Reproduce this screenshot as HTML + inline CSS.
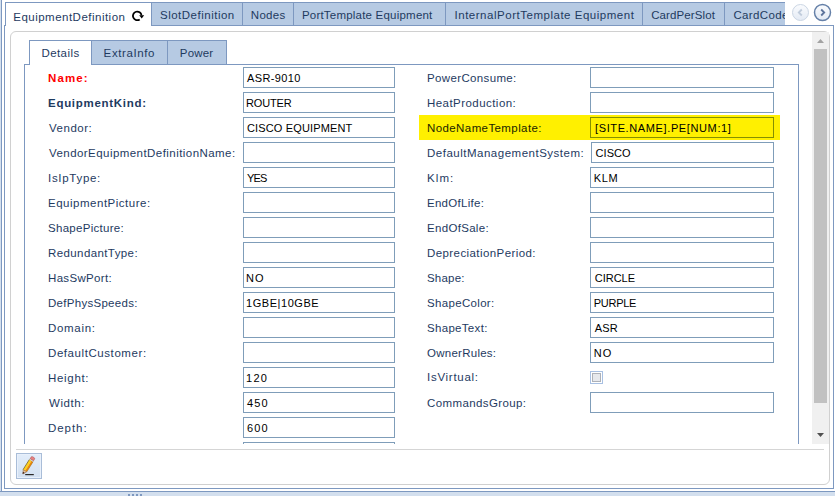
<!DOCTYPE html>
<html><head><meta charset="utf-8"><style>
*{box-sizing:border-box}
html,body{margin:0;padding:0;width:835px;height:496px;overflow:hidden;background:#fff;font-family:"Liberation Sans",sans-serif;}
.abs,.t,.tab,.inp,.chk{position:absolute}
.t{line-height:20px;white-space:nowrap}
#outerL{position:absolute;left:0;top:0;width:1px;height:496px;background:#d3dfee}
#outerL2{position:absolute;left:1px;top:0;width:1px;height:492px;background:#7d98c0}
#outerB{position:absolute;left:0;top:491px;width:835px;height:1px;background:#7d98c0}
#split{position:absolute;left:0;top:492px;width:835px;height:4px;background:#d3dfee}
.grip{position:absolute;top:494px;width:2px;height:2px;background:#7d98c0}
#tabclip{position:absolute;left:0;top:0;width:785px;height:26px;overflow:hidden}
.tab{top:2px;height:24px;background:#b6cae3;border:1px solid #7d98c0}
#seltab{position:absolute;left:5px;top:2px;width:147px;height:24px;background:#fff;border:1px solid #7d98c0;border-bottom:none;z-index:2}
#panel{position:absolute;left:4px;top:25px;width:830px;height:464px;border:1px solid #7d98c0;background:#fff}
#gray{position:absolute;left:10px;top:31px;width:820px;height:454px;border:1px solid #d0d0d0;border-radius:6px;background:#fff}
#scroll{position:absolute;left:11px;top:32px;width:801px;height:412px;overflow:hidden}
#inner{position:absolute;left:-11px;top:-32px;width:835px;height:500px}
#sub{position:absolute;left:24px;top:64px;width:775px;height:500px;border:1px solid #7d98c0;border-bottom:none}
.stab{position:absolute;top:40px;height:25px;background:#b6cae3;border:1px solid #7d98c0}
.inp{height:21px;border:1px solid #7f9db9;background:#fff}
.chk{width:13px;height:13px;border:1px solid #a8c0e2;background:#fff;padding:1px}
.chk div{width:9px;height:9px;border:1px solid #adb1b8;background:#e6e8ec}
#track{position:absolute;left:812px;top:32px;width:17px;height:412px;background:#f0f0f0}
#thumb{position:absolute;left:814px;top:49px;width:13px;height:354px;background:#c1c1c1}
#hl{position:absolute;left:419px;top:115px;width:361px;height:25px;background:#fff000}
#gline{position:absolute;left:16px;top:449px;width:808px;height:1px;background:#d5d5d5}
#editbtn{position:absolute;left:16px;top:453px;width:26px;height:26px;border:1px solid #a9bdd8;background:linear-gradient(#e2edfa,#d2e0f1);box-shadow:inset 0 0 0 1px #e8f0fb}
</style></head><body>
<div id="outerL"></div><div id="outerL2"></div><div id="outerB"></div>
<div id="split"></div>
<div class="grip" style="left:128px"></div><div class="grip" style="left:132px"></div><div class="grip" style="left:136px"></div><div class="grip" style="left:140px"></div>
<div id="panel"></div>
<div id="tabclip"><div class="tab" style="left:151px;width:92px"></div><div class="tab" style="left:242px;width:52px"></div><div class="tab" style="left:293px;width:153px"></div><div class="tab" style="left:445px;width:198px"></div><div class="tab" style="left:642px;width:83px"></div><div class="tab" style="left:724px;width:77px"></div><div class="t" style="left:160.0px;top:5px;font-size:11.5px;font-weight:normal;color:#1e3a5f;letter-spacing:0.500px">SlotDefinition</div><div class="t" style="left:250.8px;top:5px;font-size:11.5px;font-weight:normal;color:#1e3a5f;letter-spacing:0.300px">Nodes</div><div class="t" style="left:301.9px;top:5px;font-size:11.5px;font-weight:normal;color:#1e3a5f;letter-spacing:0.214px">PortTemplate Equipment</div><div class="t" style="left:454.5px;top:5px;font-size:11.5px;font-weight:normal;color:#1e3a5f;letter-spacing:0.521px">InternalPortTemplate Equipment</div><div class="t" style="left:651.2px;top:5px;font-size:11.5px;font-weight:normal;color:#1e3a5f;letter-spacing:0.110px">CardPerSlot</div><div class="t" style="left:733.4px;top:5px;font-size:11.5px;font-weight:normal;color:#1e3a5f;letter-spacing:0.355px">CardCode</div></div>
<div id="seltab"></div>
<div class="t" style="left:13.3px;top:7px;font-size:11.5px;font-weight:normal;color:#1e3a5f;letter-spacing:0.483px;z-index:3">EquipmentDefinition</div>
<svg class="abs" style="left:130px;top:8px;z-index:3" width="16" height="16" viewBox="0 0 16 16">
<path d="M9.7 11.4 A4.3 4.3 0 1 1 11.5 7.4" fill="none" stroke="#000" stroke-width="1.8"/>
<path d="M9.2 7.2 L14.2 7.2 L11.7 10.4 Z" fill="#000"/>
</svg>
<svg class="abs" style="left:791px;top:3px" width="19" height="19" viewBox="0 0 19 19">
<defs><linearGradient id="g1" x1="0" y1="0" x2="0" y2="1"><stop offset="0" stop-color="#fbfcfe"/><stop offset="1" stop-color="#e3eaf4"/></linearGradient></defs>
<circle cx="9.5" cy="9.5" r="8" fill="url(#g1)" stroke="#cbd6e4" stroke-width="1"/>
<path d="M10.8 6.5 L7.8 9.5 L10.8 12.5" fill="none" stroke="#c0ccdc" stroke-width="1.8"/>
</svg>
<svg class="abs" style="left:813px;top:3px" width="19" height="19" viewBox="0 0 19 19">
<circle cx="9.5" cy="9.5" r="8" fill="url(#g1)" stroke="#6580a8" stroke-width="1.5"/>
<path d="M8.2 6.5 L11.2 9.5 L8.2 12.5" fill="none" stroke="#5c739b" stroke-width="1.8"/>
</svg>
<div id="gray"></div>
<div id="scroll"><div id="inner">
<div id="sub"></div>
<div class="stab" style="left:91px;width:77px"></div>
<div class="stab" style="left:167px;width:60px"></div>
<div style="position:absolute;left:29px;top:40px;width:63px;height:25px;background:#fff;border:1px solid #7d98c0;border-bottom:none"></div>
<div class="t" style="left:41.4px;top:43px;font-size:11.5px;font-weight:normal;color:#1e3a5f;letter-spacing:0.433px">Details</div><div class="t" style="left:103.6px;top:43px;font-size:11.5px;font-weight:normal;color:#1e3a5f;letter-spacing:0.613px">ExtraInfo</div><div class="t" style="left:179.8px;top:43px;font-size:11.5px;font-weight:normal;color:#1e3a5f;letter-spacing:0.200px">Power</div>
<div class="t" style="left:48.0px;top:68px;font-size:11.5px;font-weight:bold;color:#ff0000;letter-spacing:1.100px">Name:</div>
<div class="inp" style="left:243px;top:67px;width:152px"></div>
<div class="t" style="left:247.0px;top:68px;font-size:11px;font-weight:normal;color:#000;letter-spacing:0.386px">ASR-9010</div>
<div class="t" style="left:48.0px;top:93px;font-size:11.5px;font-weight:bold;color:#1e3a5f;letter-spacing:0.715px">EquipmentKind:</div>
<div class="inp" style="left:243px;top:92px;width:152px"></div>
<div class="t" style="left:246.0px;top:93px;font-size:11px;font-weight:normal;color:#000;letter-spacing:-0.160px">ROUTER</div>
<div class="t" style="left:49.0px;top:118px;font-size:11.5px;font-weight:normal;color:#1e3a5f;letter-spacing:0.517px">Vendor:</div>
<div class="inp" style="left:243px;top:117px;width:152px"></div>
<div class="t" style="left:247.0px;top:118px;font-size:11px;font-weight:normal;color:#000;letter-spacing:0.143px">CISCO EQUIPMENT</div>
<div class="t" style="left:49.0px;top:143px;font-size:11.5px;font-weight:normal;color:#1e3a5f;letter-spacing:0.445px">VendorEquipmentDefinitionName:</div>
<div class="inp" style="left:243px;top:142px;width:152px"></div>
<div class="t" style="left:48.0px;top:168px;font-size:11.5px;font-weight:normal;color:#1e3a5f;letter-spacing:0.700px">IsIpType:</div>
<div class="inp" style="left:243px;top:167px;width:152px"></div>
<div class="t" style="left:247.0px;top:168px;font-size:11px;font-weight:normal;color:#000;letter-spacing:-0.800px">YES</div>
<div class="t" style="left:48.0px;top:193px;font-size:11.5px;font-weight:normal;color:#1e3a5f;letter-spacing:0.512px">EquipmentPicture:</div>
<div class="inp" style="left:243px;top:192px;width:152px"></div>
<div class="t" style="left:48.0px;top:218px;font-size:11.5px;font-weight:normal;color:#1e3a5f;letter-spacing:0.292px">ShapePicture:</div>
<div class="inp" style="left:243px;top:217px;width:152px"></div>
<div class="t" style="left:48.0px;top:243px;font-size:11.5px;font-weight:normal;color:#1e3a5f;letter-spacing:0.400px">RedundantType:</div>
<div class="inp" style="left:243px;top:242px;width:152px"></div>
<div class="t" style="left:48.0px;top:268px;font-size:11.5px;font-weight:normal;color:#1e3a5f;letter-spacing:0.322px">HasSwPort:</div>
<div class="inp" style="left:243px;top:267px;width:152px"></div>
<div class="t" style="left:246.0px;top:268px;font-size:11px;font-weight:normal;color:#000;letter-spacing:1.000px">NO</div>
<div class="t" style="left:48.0px;top:293px;font-size:11.5px;font-weight:normal;color:#1e3a5f;letter-spacing:0.285px">DefPhysSpeeds:</div>
<div class="inp" style="left:243px;top:292px;width:152px"></div>
<div class="t" style="left:246.0px;top:293px;font-size:11px;font-weight:normal;color:#000;letter-spacing:0.556px">1GBE|10GBE</div>
<div class="t" style="left:48.0px;top:318px;font-size:11.5px;font-weight:normal;color:#1e3a5f;letter-spacing:0.683px">Domain:</div>
<div class="inp" style="left:243px;top:317px;width:152px"></div>
<div class="t" style="left:48.0px;top:343px;font-size:11.5px;font-weight:normal;color:#1e3a5f;letter-spacing:0.573px">DefaultCustomer:</div>
<div class="inp" style="left:243px;top:342px;width:152px"></div>
<div class="t" style="left:48.0px;top:368px;font-size:11.5px;font-weight:normal;color:#1e3a5f;letter-spacing:0.683px">Height:</div>
<div class="inp" style="left:243px;top:367px;width:152px"></div>
<div class="t" style="left:246.0px;top:368px;font-size:11px;font-weight:normal;color:#000;letter-spacing:1.300px">120</div>
<div class="t" style="left:49.0px;top:393px;font-size:11.5px;font-weight:normal;color:#1e3a5f;letter-spacing:0.560px">Width:</div>
<div class="inp" style="left:243px;top:392px;width:152px"></div>
<div class="t" style="left:247.0px;top:393px;font-size:11px;font-weight:normal;color:#000;letter-spacing:1.100px">450</div>
<div class="t" style="left:48.0px;top:418px;font-size:11.5px;font-weight:normal;color:#1e3a5f;letter-spacing:0.940px">Depth:</div>
<div class="inp" style="left:243px;top:417px;width:152px"></div>
<div class="t" style="left:247.0px;top:418px;font-size:11px;font-weight:normal;color:#000;letter-spacing:1.100px">600</div>
<div class="inp" style="left:243px;top:442px;width:152px"></div>
<div class="t" style="left:427.0px;top:68px;font-size:11.5px;font-weight:normal;color:#1e3a5f;letter-spacing:0.358px">PowerConsume:</div>
<div class="inp" style="left:590px;top:67px;width:184px"></div>
<div class="t" style="left:427.0px;top:93px;font-size:11.5px;font-weight:normal;color:#1e3a5f;letter-spacing:0.450px">HeatProduction:</div>
<div class="inp" style="left:590px;top:92px;width:184px"></div>
<div class="t" style="left:427.0px;top:143px;font-size:11.5px;font-weight:normal;color:#1e3a5f;letter-spacing:0.504px">DefaultManagementSystem:</div>
<div class="inp" style="left:591px;top:142px;width:183px"></div>
<div class="t" style="left:595.6px;top:143px;font-size:11px;font-weight:normal;color:#000;letter-spacing:0.025px">CISCO</div>
<div class="t" style="left:427.0px;top:168px;font-size:11.5px;font-weight:normal;color:#1e3a5f;letter-spacing:1.100px">Klm:</div>
<div class="inp" style="left:590px;top:167px;width:184px"></div>
<div class="t" style="left:593.8px;top:168px;font-size:11px;font-weight:normal;color:#000;letter-spacing:0.600px">KLM</div>
<div class="t" style="left:427.0px;top:193px;font-size:11.5px;font-weight:normal;color:#1e3a5f;letter-spacing:0.278px">EndOfLife:</div>
<div class="inp" style="left:590px;top:192px;width:184px"></div>
<div class="t" style="left:427.0px;top:218px;font-size:11.5px;font-weight:normal;color:#1e3a5f;letter-spacing:0.311px">EndOfSale:</div>
<div class="inp" style="left:590px;top:217px;width:184px"></div>
<div class="t" style="left:427.0px;top:243px;font-size:11.5px;font-weight:normal;color:#1e3a5f;letter-spacing:0.417px">DepreciationPeriod:</div>
<div class="inp" style="left:590px;top:242px;width:184px"></div>
<div class="t" style="left:427.0px;top:268px;font-size:11.5px;font-weight:normal;color:#1e3a5f;letter-spacing:0.200px">Shape:</div>
<div class="inp" style="left:590px;top:267px;width:184px"></div>
<div class="t" style="left:594.8px;top:268px;font-size:11px;font-weight:normal;color:#000;letter-spacing:-0.020px">CIRCLE</div>
<div class="t" style="left:427.0px;top:293px;font-size:11.5px;font-weight:normal;color:#1e3a5f;letter-spacing:0.330px">ShapeColor:</div>
<div class="inp" style="left:590px;top:292px;width:184px"></div>
<div class="t" style="left:593.8px;top:293px;font-size:11px;font-weight:normal;color:#000;letter-spacing:-0.280px">PURPLE</div>
<div class="t" style="left:427.0px;top:318px;font-size:11.5px;font-weight:normal;color:#1e3a5f;letter-spacing:0.311px">ShapeText:</div>
<div class="inp" style="left:590px;top:317px;width:184px"></div>
<div class="t" style="left:594.8px;top:318px;font-size:11px;font-weight:normal;color:#000;letter-spacing:0.100px">ASR</div>
<div class="t" style="left:427.0px;top:343px;font-size:11.5px;font-weight:normal;color:#1e3a5f;letter-spacing:0.260px">OwnerRules:</div>
<div class="inp" style="left:590px;top:342px;width:184px"></div>
<div class="t" style="left:593.8px;top:343px;font-size:11px;font-weight:normal;color:#000;letter-spacing:0.900px">NO</div>
<div class="t" style="left:427.0px;top:367px;font-size:11.5px;font-weight:normal;color:#1e3a5f;letter-spacing:0.722px">IsVirtual:</div>
<div class="chk" style="left:590px;top:371px"><div></div></div>
<div class="t" style="left:427.0px;top:393px;font-size:11.5px;font-weight:normal;color:#1e3a5f;letter-spacing:0.392px">CommandsGroup:</div>
<div class="inp" style="left:590px;top:392px;width:184px"></div>
<div id="hl"></div>
<div class="t" style="left:427.0px;top:118px;font-size:11.5px;font-weight:normal;color:#1a1f00;letter-spacing:0.406px">NodeNameTemplate:</div>
<div class="inp" style="left:590px;top:117px;width:184px;background:transparent;border-color:#869000"></div>
<div class="t" style="left:595.0px;top:118px;font-size:11px;font-weight:normal;color:#000;letter-spacing:0.620px">[SITE.NAME].PE[NUM:1]</div>
</div></div>
<div id="track"></div>
<div id="thumb"></div>
<svg class="abs" style="left:812px;top:32px" width="17" height="411" viewBox="0 0 17 411">
<path d="M5 11 L12 11 L8.5 7 Z" fill="#a3a3a3"/>
<path d="M5 401 L12 401 L8.5 405 Z" fill="#505050"/>
</svg>
<div id="gline"></div>
<div id="editbtn"></div>
<svg class="abs" style="left:16px;top:453px" width="26" height="26" viewBox="0 0 26 26">
<polygon points="7.22,16.72 13.58,6.53 15.45,7.70 9.08,17.88" fill="#ffd21a"/>
<polygon points="9.08,17.88 15.45,7.70 16.98,8.65 10.61,18.84" fill="#f08c00"/>
<polyline points="7.05,16.61 13.41,6.43" fill="none" stroke="#6a4a00" stroke-width="0.7"/>
<polyline points="10.69,18.89 17.06,8.70" fill="none" stroke="#a05a00" stroke-width="0.6"/>
<polygon points="6.90,21.00 7.22,16.72 10.61,18.84" fill="#efc9a0" stroke="#7a5030" stroke-width="0.5"/>
<polygon points="6.56,20.79 6.97,18.81 8.75,19.92" fill="#3a1a10"/>
<polygon points="13.58,6.53 14.17,5.60 17.56,7.72 16.98,8.65" fill="#f8f8f8" stroke="#888" stroke-width="0.4"/>
<polygon points="14.17,5.60 15.33,3.73 16.55,3.67 18.25,4.73 18.72,5.85 17.56,7.72" fill="#e88080" stroke="#a04848" stroke-width="0.5"/>
<rect x="9.2" y="21" width="8.6" height="1.2" fill="#2a2a2a"/>
</svg>
</body></html>
